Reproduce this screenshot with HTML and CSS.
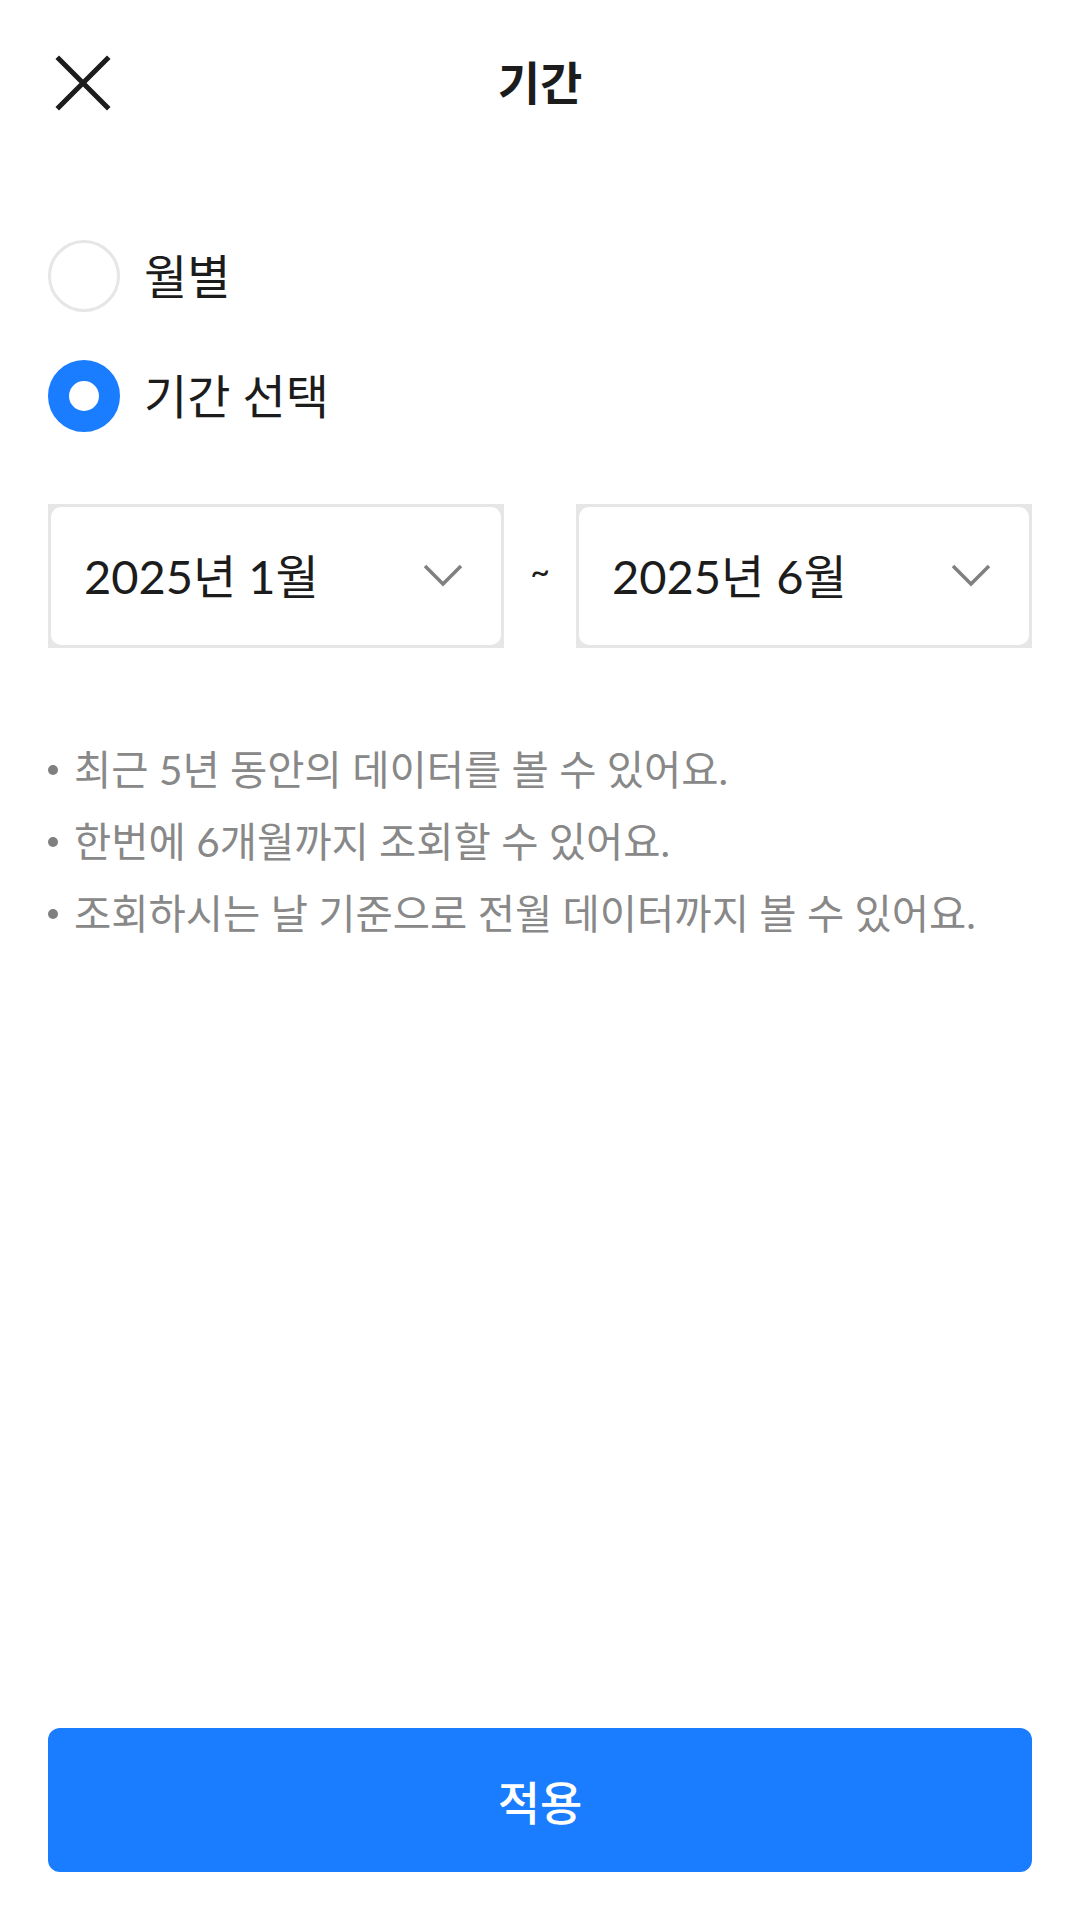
FILE: index.html
```html
<!DOCTYPE html>
<html lang="ko">
<head>
<meta charset="utf-8">
<link rel="stylesheet" href="styles.css">
</head>
<body>
<div class="page">
  <header class="header">
    <button class="close" aria-label="닫기">
      <svg width="56" height="56" viewBox="0 0 56 56"><path d="M4 4 L52 52 M52 4 L4 52" stroke="#1c1c1c" stroke-width="5" stroke-linecap="square" fill="none"/></svg>
    </button>
    <h1 class="title">기간</h1>
  </header>

  <section class="options">
    <label class="radio-row">
      <span class="radio"></span>
      <span class="radio-label">월별</span>
    </label>
    <label class="radio-row">
      <span class="radio radio-on"></span>
      <span class="radio-label">기간 선택</span>
    </label>
  </section>

  <section class="range">
    <div class="select">
      <div class="select-inner">
        <span class="select-text">2025년 1월</span>
        <svg class="chev" width="40" height="24" viewBox="0 0 40 24"><path d="M2 2 L20 20 L38 2" stroke="#808080" stroke-width="3.5" fill="none"/></svg>
      </div>
    </div>
    <span class="tilde">~</span>
    <div class="select">
      <div class="select-inner">
        <span class="select-text">2025년 6월</span>
        <svg class="chev" width="40" height="24" viewBox="0 0 40 24"><path d="M2 2 L20 20 L38 2" stroke="#808080" stroke-width="3.5" fill="none"/></svg>
      </div>
    </div>
  </section>

  <ul class="notes">
    <li>최근 5년 동안의 데이터를 볼 수 있어요.</li>
    <li>한번에 6개월까지 조회할 수 있어요.</li>
    <li>조회하시는 날 기준으로 전월 데이터까지 볼 수 있어요.</li>
  </ul>

  <div class="spacer"></div>

  <div class="footer">
    <button class="apply">적용</button>
  </div>
</div>
</body>
</html>
```

FILE: styles.css
```css
* { box-sizing: border-box; }
html, body { margin: 0; padding: 0; background: #ffffff; }
body {
  font-family: Lato, "Noto Sans CJK KR", sans-serif;
  color: #1c1c1c;
}
.page {
  width: 1080px;
  height: 1920px;
  display: flex;
  flex-direction: column;
}
.header {
  position: relative;
  height: 166px;
  display: flex;
  align-items: center;
  justify-content: center;
}
.close {
  position: absolute;
  left: 55px;
  top: 55px;
  width: 56px;
  height: 56px;
  padding: 0;
  border: 0;
  background: none;
  display: flex;
}
.title {
  margin: 0;
  font-size: 46px;
  font-weight: 700;
  line-height: 1;
}
.options {
  display: flex;
  flex-direction: column;
  gap: 48px;
  padding: 74px 48px 0;
}
.radio-row {
  display: flex;
  align-items: center;
  gap: 24px;
  height: 72px;
}
.radio {
  width: 72px;
  height: 72px;
  border-radius: 50%;
  border: 3px solid #e6e6e6;
  flex: none;
}
.radio-on {
  border: 21px solid #1a7dff;
  background: #fff;
}
.radio-label {
  font-size: 47px;
  line-height: 1;
}
.range {
  display: flex;
  align-items: center;
  padding: 72px 48px 0;
}
.select {
  width: 456px;
  height: 144px;
  background: #e6e6e6;
  padding: 3px;
  flex: none;
}
.select-inner {
  height: 100%;
  background: #fff;
  border-radius: 10px;
  display: flex;
  align-items: center;
  justify-content: space-between;
  padding: 0 38px 0 33px;
}
.select-text {
  font-size: 47px;
  line-height: 1;
}
.chev { display: block; }
.tilde {
  flex: 1;
  text-align: center;
  font-size: 34px;
  line-height: 1;
  padding-bottom: 10px;
}
.notes {
  list-style: none;
  margin: 0;
  padding: 86px 48px 0;
  display: flex;
  flex-direction: column;
}
.notes li {
  position: relative;
  padding-left: 26px;
  font-size: 40.5px;
  line-height: 72px;
  color: #888888;
}
.notes li::before {
  content: "";
  position: absolute;
  left: 0;
  top: 31px;
  width: 10px;
  height: 10px;
  border-radius: 50%;
  background: #808080;
}
.spacer { flex: 1; }
.footer {
  padding: 0 48px 48px;
}
.apply {
  width: 100%;
  height: 144px;
  border: 0;
  border-radius: 12px;
  background: #1a7dff;
  color: #fff;
  font-family: Lato, "Noto Sans CJK KR", sans-serif;
  font-size: 46px;
  font-weight: 500;
}
```
